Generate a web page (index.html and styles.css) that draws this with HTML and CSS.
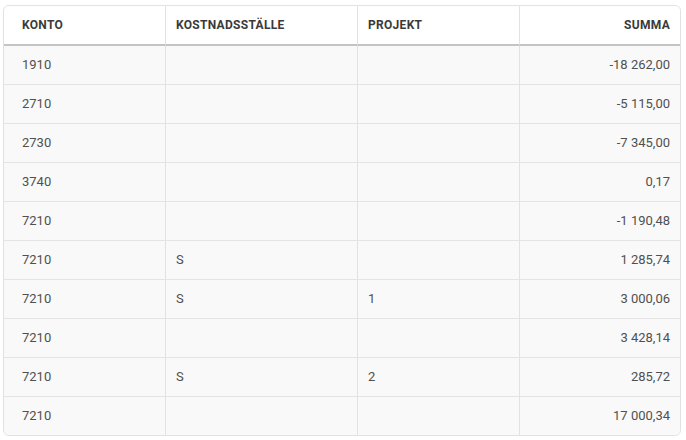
FILE: index.html
```html
<!DOCTYPE html>
<html lang="sv">
<head>
<meta charset="utf-8">
<link rel="stylesheet" href="styles.css">
</head>
<body>
<div class="card">
<table class="grid">
<colgroup><col class="c1"><col class="c2"><col class="c3"><col class="c4"></colgroup>
<thead>
<tr><th>Konto</th><th>Kostnadsställe</th><th>Projekt</th><th class="num">Summa</th></tr>
</thead>
<tbody>
<tr><td>1910</td><td></td><td></td><td class="num">-18 262,00</td></tr>
<tr><td>2710</td><td></td><td></td><td class="num">-5 115,00</td></tr>
<tr><td>2730</td><td></td><td></td><td class="num">-7 345,00</td></tr>
<tr><td>3740</td><td></td><td></td><td class="num">0,17</td></tr>
<tr><td>7210</td><td></td><td></td><td class="num">-1 190,48</td></tr>
<tr><td>7210</td><td>S</td><td></td><td class="num">1 285,74</td></tr>
<tr><td>7210</td><td>S</td><td>1</td><td class="num">3 000,06</td></tr>
<tr><td>7210</td><td></td><td></td><td class="num">3 428,14</td></tr>
<tr><td>7210</td><td>S</td><td>2</td><td class="num">285,72</td></tr>
<tr><td>7210</td><td></td><td></td><td class="num">17 000,34</td></tr>
</tbody>
</table>
</div>
</body>
</html>
```
FILE: styles.css
```css
html, body {
  margin: 0;
  padding: 0;
  background: #ffffff;
}
body {
  padding: 5px 5px 0 3px;
  font-family: Roboto, "Liberation Sans", Arial, sans-serif;
}
.card {
  width: 678px;
  box-sizing: border-box;
  border: 1px solid #e2e2e2;
  border-radius: 6px;
  overflow: hidden;
  background: #fafafa;
  box-shadow: 0 0 1px rgba(0,0,0,0.04);
}
.grid {
  width: 100%;
  border-collapse: separate;
  border-spacing: 0;
  table-layout: fixed;
}
.c1 { width: 162px; }
.c2 { width: 192px; }
.c3 { width: 162px; }
.c4 { width: auto; }
th, td {
  text-align: left;
  padding: 0 10px 0 10px;
  border-right: 1px solid #e2e2e2;
  white-space: nowrap;
}
th:first-child, td:first-child {
  padding-left: 18px;
}
th:last-child, td:last-child {
  border-right: none;
}
th {
  height: 38px;
  background: #ffffff;
  color: #3a3a3a;
  font-size: 12px;
  font-weight: 700;
  text-transform: uppercase;
  letter-spacing: 0.3px;
  border-bottom: 2px solid #c4c4c4;
}
td {
  height: 36px;
  padding-bottom: 2px;
  color: #505050;
  font-size: 13px;
  background: #f9f9f9;
  border-bottom: 1px solid #e4e4e4;
}
tbody tr:last-child td {
  border-bottom: none;
}
.num {
  text-align: right;
}
```
